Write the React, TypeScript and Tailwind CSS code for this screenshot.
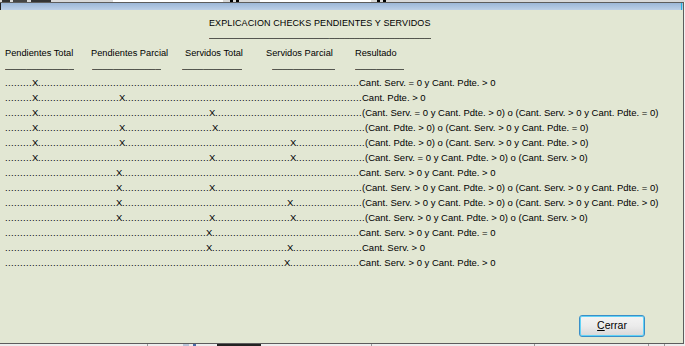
const FONT = "font-['Liberation_Sans',Arial,sans-serif]";

type Row = { marks: number[]; at: number; text: string };

// x positions (px) of each "X" and where the result text starts
const ROWS: Row[] = [
  { marks: [32], at: 359, text: "Cant. Serv. = 0 y Cant. Pdte. > 0" },
  { marks: [32, 119], at: 362, text: "Cant. Pdte. > 0" },
  { marks: [32, 209], at: 362, text: "(Cant. Serv. = 0 y Cant. Pdte. > 0) o (Cant. Serv. > 0 y Cant. Pdte. = 0)" },
  { marks: [32, 119, 212], at: 365, text: "(Cant. Pdte. > 0) o (Cant. Serv. > 0 y Cant. Pdte. = 0)" },
  { marks: [32, 119, 290], at: 365, text: "(Cant. Pdte. > 0) o (Cant. Serv. > 0 y Cant. Pdte. > 0)" },
  { marks: [32, 209, 290], at: 365, text: "(Cant. Serv. = 0 y Cant. Pdte. > 0) o (Cant. Serv. > 0)" },
  { marks: [116], at: 359, text: "Cant. Serv. > 0 y Cant. Pdte. > 0" },
  { marks: [116, 209], at: 362, text: "(Cant. Serv. > 0 y Cant. Pdte. > 0) o (Cant. Serv. > 0 y Cant. Pdte. = 0)" },
  { marks: [116, 287], at: 362, text: "(Cant. Serv. > 0 y Cant. Pdte. > 0) o (Cant. Serv. > 0 y Cant. Pdte. > 0)" },
  { marks: [116, 209, 290], at: 365, text: "(Cant. Serv. > 0 y Cant. Pdte. > 0) o (Cant. Serv. > 0)" },
  { marks: [206], at: 359, text: "Cant. Serv. > 0 y Cant. Pdte. = 0" },
  { marks: [206, 287], at: 362, text: "Cant. Serv. > 0" },
  { marks: [284], at: 359, text: "Cant. Serv. > 0 y Cant. Pdte. > 0" },
];

const DOTS = ".".repeat(140);
const LINE = "_".repeat(60);

function Dots({ width }: { width: number }) {
  return (
    <span
      className="inline-block shrink-0 overflow-hidden whitespace-nowrap tracking-[0.36px]"
      style={{ width }}
    >
      {DOTS}
    </span>
  );
}

function CheckRow({ row }: { row: Row }) {
  let cur = 5;
  const parts: React.ReactNode[] = [];
  row.marks.forEach((x, i) => {
    parts.push(<Dots key={`d${i}`} width={x - cur} />);
    parts.push(
      <span key={`x${i}`} className="inline-block w-[6px] shrink-0">
        X
      </span>
    );
    cur = x + 6;
  });
  parts.push(<Dots key="dl" width={row.at - cur} />);
  return (
    <div className="flex h-[15px] items-start pl-[5px] leading-[15px] whitespace-nowrap">
      {parts}
      <span>{row.text}</span>
    </div>
  );
}

function Rule({ className }: { className: string }) {
  return (
    <span className={`inline-block shrink-0 overflow-hidden whitespace-nowrap ${className}`}>
      {LINE}
    </span>
  );
}

export default function App() {
  return (
    <div className={`flex h-[346px] w-[685px] flex-col overflow-hidden bg-[#e9e9e9] ${FONT}`}>
      {/* bits of the window behind */}
      <div className="flex h-[2px] shrink-0 bg-[#d9d9d9]">
        <span className="ml-[2px] w-[8px] bg-[#333]" />
        <span className="ml-[3px] w-[14px] bg-[#444]" />
        <span className="ml-[4px] w-[20px] bg-[#333]" />
        <span className="ml-[62px] w-[110px] bg-white" />
        <span className="ml-[7px] w-[3px] bg-black" />
        <span className="ml-[3px] w-[3px] bg-black" />
        <span className="ml-[21px] w-[111px] bg-white" />
        <span className="ml-[6px] w-[3px] bg-black" />
        <span className="ml-[3px] w-[3px] bg-black" />
      </div>

      <div className="flex h-[342px] shrink-0">
        <div className="flex w-[684px] flex-col border-y border-r border-[#5d5d5d]">
          <div className="relative h-[7px] shrink-0 bg-linear-to-b from-[#9cb7d8] to-[#bdd0e7]">
            <span className="absolute left-0 top-0 h-[7px] w-px bg-[#222]" />
            <span className="absolute right-[1px] top-0 h-[7px] w-px bg-[#22b4e0]" />
          </div>

          <div className="flex flex-1 flex-col bg-[#e2e7d3] text-[9.5px] text-black">
            <div className="pl-[209px] pt-[8px] text-[9px] leading-[11px] tracking-[0.1px]">
              EXPLICACION CHECKS PENDIENTES Y SERVIDOS
            </div>
            <div className="flex pl-[209px] text-[9px] leading-[11px]">
              <Rule className="w-[222px]" />
            </div>

            <div className="mt-[8px] flex pl-[5px] text-[9.25px] leading-[11px] whitespace-nowrap">
              <span className="w-[86px] shrink-0">Pendientes Total</span>
              <span className="w-[94px] shrink-0">Pendientes Parcial</span>
              <span className="w-[81px] shrink-0">Servidos Total</span>
              <span className="w-[89px] shrink-0">Servidos Parcial</span>
              <span>Resultado</span>
            </div>
            <div className="flex pl-[5px] leading-[11px]">
              <span className="flex w-[87px] shrink-0">
                <Rule className="w-[69px]" />
              </span>
              <span className="flex w-[90px] shrink-0">
                <Rule className="w-[69px]" />
              </span>
              <span className="flex w-[90px] shrink-0">
                <Rule className="w-[60px]" />
              </span>
              <span className="flex w-[83px] shrink-0">
                <Rule className="w-[63px]" />
              </span>
              <Rule className="w-[49px]" />
            </div>

            <div className="mt-[5px] flex flex-col">
              {ROWS.map((row, i) => (
                <CheckRow key={i} row={row} />
              ))}
            </div>

            <div className="flex flex-1 items-end justify-end pb-[6px] pr-[38px]">
              <button
                type="button"
                className="h-[22px] w-[66px] rounded-[3px] border border-[#3a8fc8] bg-linear-to-b from-[#f4f4f4] via-[#ebebeb] to-[#d8d8d8] text-[10.5px] text-black shadow-[inset_0_0_0_1px_#62d2f6]"
              >
                <span className="underline underline-offset-1">C</span>errar
              </button>
            </div>
          </div>
        </div>
        <div className="w-px bg-[#f0f0f0]" />
      </div>

      {/* status strip behind */}
      <div className="flex h-[2px] shrink-0 bg-[#ededed]">
        <span className="ml-[147px] w-px bg-[#9a9a9a]" />
        <span className="ml-[35px] w-[6px] bg-[#b8c4d8]" />
        <span className="ml-[4px] w-[3px] bg-[#4a6aa8]" />
        <span className="ml-[21px] w-[44px] bg-[#222]" />
        <span className="ml-[110px] w-px bg-[#9a9a9a]" />
        <span className="ml-[162px] w-px bg-[#9a9a9a]" />
        <span className="ml-[113px] w-px bg-[#9a9a9a]" />
        <span className="ml-[15px] w-px bg-[#9a9a9a]" />
      </div>
    </div>
  );
}
